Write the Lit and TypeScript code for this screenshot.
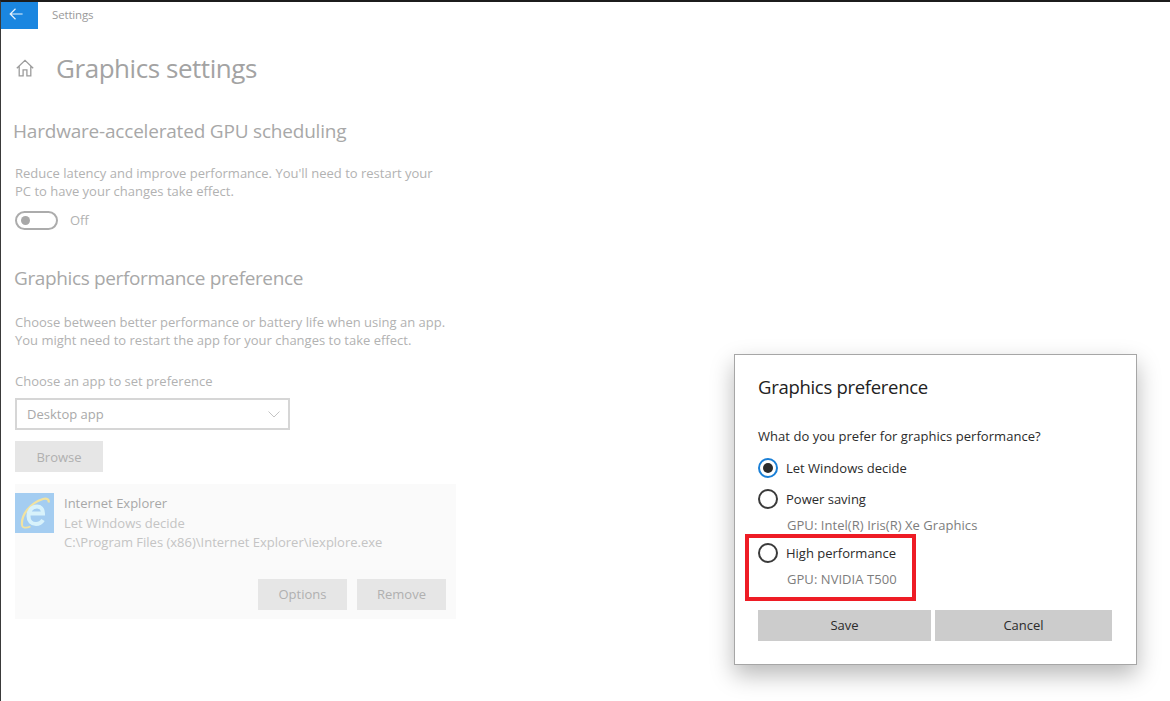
import { LitElement, html, css } from "lit";
import { customElement } from "lit/decorators.js";

@customElement("app-root")
export class AppRoot extends LitElement {
  static styles = css`
    :host {
      display: block;
      position: relative;
      width: 1170px;
      height: 701px;
      box-sizing: border-box;
      overflow: hidden;
      background: #fff;
      border-top: 2px solid #1c1c1c;
      border-left: 1px solid #3a3a3a;
      font-family: "Open Sans", "Noto Sans", "Liberation Sans", sans-serif;
      color: #a9a9a9;
    }
    .titlebar { display: flex; align-items: flex-start; height: 28px; }
    .back {
      width: 37px; height: 27px; background: #1a86e0;
      display: flex; align-items: flex-start; padding: 6px 0 0 8px; box-sizing: border-box;
    }
    .titlebar .name { margin: 5px 0 0 14px; font-size: 11.5px; line-height: 16px; color: #9a9a9a; letter-spacing: -0.15px; }
    .header { display: flex; align-items: center; margin-top: 18px; height: 40px; padding-left: 15px; }
    .header h1 {
      margin: 0 0 0 22px; font-weight: 400; font-size: 26px; letter-spacing: -0.45px; color: #a3a3a3; line-height: 40px;
    }
    .content { padding-left: 13px; }
    h2 {
      margin: 0; font-weight: 400; font-size: 19px; line-height: 28px; color: #a8a8a8;
    }
    .hw { margin-top: 29px; letter-spacing: -0.2px; margin-left: -1px; }
    p {
      margin: 0; font-size: 13px; line-height: 18px; color: #b2b2b2; padding-left: 1px;
    }
    .p1 { margin-top: 19px; }
    .toggle-row { display: flex; align-items: center; margin-top: 10px; height: 20px; padding-left: 1px; }
    .toggle {
      width: 43px; height: 19px; box-sizing: border-box; border: 2px solid #acacac; border-radius: 10px;
      display: flex; align-items: center; padding-left: 4px;
    }
    .knob { width: 9px; height: 9px; border-radius: 50%; background: #a8a8a8; }
    .toggle-row span { margin-left: 12px; font-size: 13px; color: #b2b2b2; }
    .gp { margin-top: 34px; letter-spacing: -0.37px; }
    .p2 { margin-top: 21px; }
    .choose { margin-top: 23px; }
    .select {
      display: flex; align-items: center; justify-content: space-between;
      width: 275px; height: 32px; box-sizing: border-box; margin: 8px 0 0 1px;
      border: 2px solid #d6d6d6; padding: 0 8px 0 10px; font-size: 13px; color: #a9a9a9;
    }
    .btn {
      display: flex; align-items: center; justify-content: center; background: #e6e6e6;
      height: 31px; font-size: 13px; color: #b0b0b0; box-sizing: border-box;
    }
    .browse { width: 88px; margin: 11px 0 0 1px; }
    .app {
      margin-top: 12px; margin-left: 1px; width: 441px; height: 135px; box-sizing: border-box;
      background: #fafafa; padding: 9px 10px 0 0; display: flex; flex-direction: column;
    }
    .app-top { display: flex; }
    .app svg.ie { width: 39px; height: 40px; flex: none; }
    .app-text { margin: 1px 0 0 10px; font-size: 13px; line-height: 19.5px; color: #c4c4c4; }
    .app-text .n { color: #a8a8a8; }
    .app-actions { display: flex; justify-content: flex-end; gap: 10px; margin-top: 26px; }
    .app-actions .btn { width: 89px; }
    .dialog {
      position: absolute; left: 733px; top: 352px; width: 403px; height: 311px; box-sizing: border-box;
      background: #fff; border: 1px solid #a6a6a6; padding: 18px 23px 0;
      box-shadow: 0 10px 22px rgba(0,0,0,0.28);
      color: #2b2b2b;
    }
    .dialog h3 { margin: 0; font-weight: 400; font-size: 18.5px; line-height: 28px; letter-spacing: -0.3px; color: #222; }
    .q { margin-top: 26px; font-size: 13px; line-height: 18px; letter-spacing: 0.04px; color: #2b2b2b; }
    .opt { display: flex; align-items: center; height: 20px; font-size: 13px; color: #2b2b2b; gap: 8px; }
    .radio {
      width: 20px; height: 20px; box-sizing: border-box; border: 2px solid #3a3a3a; border-radius: 50%;
      display: flex; align-items: center; justify-content: center; flex: none;
    }
    .radio.on { border-color: #1a7fd6; }
    .radio.on i { width: 10px; height: 10px; border-radius: 50%; background: #2b2b2b; display: block; }
    .o1 { margin-top: 13px; }
    .o2 { margin-top: 11px; }
    .o3 { margin-top: 9px; }
    .gpu { margin: 7px 0 0 29px; font-size: 13px; line-height: 18px; letter-spacing: 0.05px; color: #7d7d7d; }
    .gpu.g3 { margin-top: 7px; }
    .actions { display: flex; gap: 4px; margin-top: 22px; width: 354px; }
    .actions .btn { height: 31px; padding-bottom: 1px; background: #cccccc; color: #2b2b2b; }
    .actions .save { width: 173px; }
    .actions .cancel { width: 177px; }
    .mark {
      position: absolute; left: 744px; top: 532px; width: 171px; height: 67px; box-sizing: border-box;
      border: 4px solid #ee1c25; pointer-events: none;
    }
  `;

  render() {
    return html`
      <div class="titlebar">
        <div class="back">
          <svg width="14" height="12" viewBox="0 0 14 12" fill="none" stroke="#e8f3fc" stroke-width="1.2">
            <path d="M6.5 .8 1.2 6l5.3 5.2M1.2 6H13.6" />
          </svg>
        </div>
        <span class="name">Settings</span>
      </div>
      <div class="header">
        <svg width="18" height="18" viewBox="0 0 18 18" fill="none" stroke="#9c9c9c" stroke-width="1.3">
          <path d="M.8 9.2 9 1.4l8.2 7.8M3.2 7.2v9.6h3.9v-6h3.8v6h3.9V7.2" />
        </svg>
        <h1>Graphics settings</h1>
      </div>
      <div class="content">
        <h2 class="hw">Hardware-accelerated GPU scheduling</h2>
        <p class="p1">Reduce latency and improve performance. You'll need to restart your<br />PC to have your changes take effect.</p>
        <div class="toggle-row">
          <div class="toggle"><div class="knob"></div></div>
          <span>Off</span>
        </div>
        <h2 class="gp">Graphics performance preference</h2>
        <p class="p2">Choose between better performance or battery life when using an app.<br />You might need to restart the app for your changes to take effect.</p>
        <p class="choose">Choose an app to set preference</p>
        <div class="select">
          <span>Desktop app</span>
          <svg width="12" height="7" viewBox="0 0 12 7" fill="none" stroke="#c4c4c4" stroke-width="1"><path d="M.5.5 6 6l5.500-5.500" /></svg>
        </div>
        <div class="btn browse">Browse</div>
        <div class="app">
          <div class="app-top">
            <svg class="ie" viewBox="0 0 39 40">
              <rect width="39" height="40" fill="#a4cdf1" />
              <path d="M7 32C6 22 15 10 28 6c4-1 6.500 .5 5.500 3.500" fill="none" stroke="#f2e3a0" stroke-width="2.200" />
              <path d="M7 32c0 3 4 3.500 8.500 1.500" fill="none" stroke="#f2e3a0" stroke-width="1.800" />
              <path d="M15 20.500h13c0-4.500-2.500-7-6-7-5.500 0-8.500 4.500-8.500 9.500 0 5 3 8 7.500 8 3.500 0 5.500-1.500 7-4" fill="none" stroke="#d8f2fb" stroke-width="4" />
            </svg>
            <div class="app-text">
              <div class="n">Internet Explorer</div>
              <div>Let Windows decide</div>
              <div>C:\\Program Files (x86)\\Internet Explorer\\iexplore.exe</div>
            </div>
          </div>
          <div class="app-actions">
            <div class="btn">Options</div>
            <div class="btn">Remove</div>
          </div>
        </div>
      </div>
      <div class="dialog">
        <h3>Graphics preference</h3>
        <div class="q">What do you prefer for graphics performance?</div>
        <div class="opt o1"><span class="radio on"><i></i></span>Let Windows decide</div>
        <div class="opt o2"><span class="radio"></span>Power saving</div>
        <div class="gpu">GPU: Intel(R) Iris(R) Xe Graphics</div>
        <div class="opt o3"><span class="radio"></span>High performance</div>
        <div class="gpu g3">GPU: NVIDIA T500</div>
        <div class="actions">
          <div class="btn save">Save</div>
          <div class="btn cancel">Cancel</div>
        </div>
      </div>
      <div class="mark"></div>
    `;
  }
}
